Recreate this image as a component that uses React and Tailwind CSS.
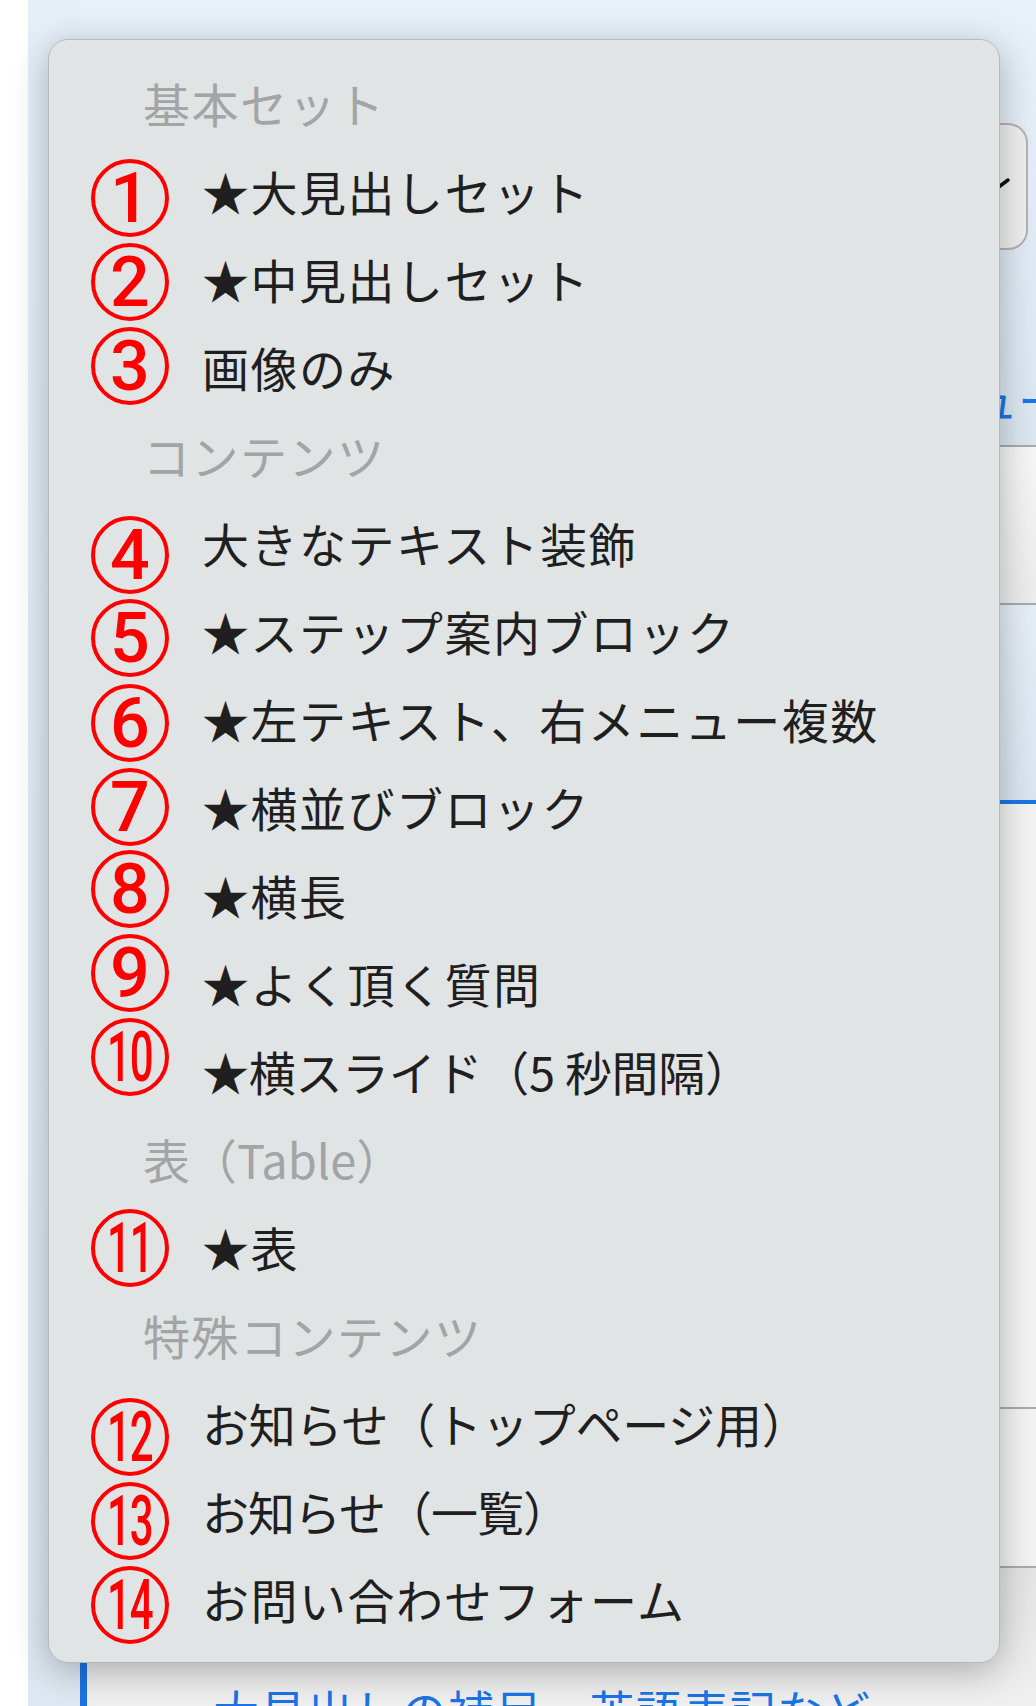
import React from "react";

// menu rows: header = group label, item = selectable option with red annotation number
const rows = [
  { type: "header", label: "基本セット" },
  { type: "item", no: "1", label: "★大見出しセット", shift: "translate-y-[4px]" },
  { type: "item", no: "2", label: "★中見出しセット", shift: "translate-y-[0px]" },
  { type: "item", no: "3", label: "画像のみ", shift: "-translate-y-[4px]" },
  { type: "header", label: "コンテンツ" },
  { type: "item", no: "4", label: "大きなテキスト装飾", shift: "translate-y-[9px]" },
  { type: "item", no: "5", label: "★ステップ案内ブロック", shift: "translate-y-[4px]" },
  { type: "item", no: "6", label: "★左テキスト、右メニュー複数", shift: "translate-y-[1px]" },
  { type: "item", no: "7", label: "★横並びブロック", shift: "-translate-y-[3px]" },
  { type: "item", no: "8", label: "★横長", shift: "-translate-y-[9px]" },
  { type: "item", no: "9", label: "★よく頂く質問", shift: "-translate-y-[13px]" },
  { type: "item", no: "10", label: "★横スライド（5 秒間隔）", shift: "-translate-y-[17px]", track: "tracking-[-0.3px]" },
  { type: "header", label: "表（Table）", track: "tracking-[0px]" },
  { type: "item", no: "11", label: "★表", shift: "-translate-y-[2px]" },
  { type: "header", label: "特殊コンテンツ" },
  { type: "item", no: "12", label: "お知らせ（トップページ用）", shift: "translate-y-[11px]", track: "tracking-[-0.2px]" },
  { type: "item", no: "13", label: "お知らせ（一覧）", shift: "translate-y-[7px]", track: "tracking-[-1px]" },
  { type: "item", no: "14", label: "お問い合わせフォーム", shift: "translate-y-[3px]" },
];

function Badge({ no, shift }) {
  const wide = no.length > 1;
  return (
    <div
      className={`ml-[42px] flex h-[78px] w-[78px] shrink-0 items-center justify-center rounded-full border-[4px] border-[#ff0000] ${shift}`}
    >
      <span
        className={`inline-block font-['Roboto','Liberation_Sans',sans-serif] text-[70px] font-medium leading-none text-[#ff0000] ${
          wide ? "scale-x-[0.6] tracking-[-2px]" : ""
        }`}
      >
        {no}
      </span>
    </div>
  );
}

function PageBehind() {
  return (
    <div className="flex h-full w-full">
      <div className="w-[28px] shrink-0 bg-white" />
      {/* sidebar strip */}
      <div className="w-[52px] shrink-0 bg-gradient-to-b from-[#e6eff8] to-[#dfe8f2]" />
      <div className="flex min-w-0 flex-1 flex-col">
        {/* top area with select */}
        <div className="flex h-[447px] shrink-0 flex-col border-b-2 border-[#a8abae] bg-gradient-to-b from-[#e8f1fa] to-[#dbe6f1]">
          <div className="flex justify-end pr-[8px] pt-[123px]">
            <div className="flex h-[127px] w-[420px] items-center justify-end rounded-[20px] border-2 border-[#b3b3b3] bg-[#efefef] pr-[14px]">
              <svg width="40" height="24" viewBox="0 0 40 24" className="-translate-y-[1px]">
                <polyline points="4,6 20,18 36,6" fill="none" stroke="#111" strokeWidth="3.5" strokeLinecap="round" />
              </svg>
            </div>
          </div>
          <div className="mt-auto whitespace-nowrap pb-[24px] pl-[662px] font-['Noto_Sans_CJK_JP',sans-serif] text-[46px] leading-none text-[#1b74e4]">
            トップメニュー
          </div>
        </div>
        <div className="h-[158px] shrink-0 border-b-2 border-[#a8abae] bg-gradient-to-b from-[#f6f6f6] to-[#ececec]" />
        <div className="h-[199px] shrink-0 border-b-[4px] border-[#1b74e4] bg-gradient-to-b from-[#e6eef7] to-[#dbe5f0]" />
        <div className="flex flex-1">
          <div className="w-[7px] shrink-0 bg-[#1b74e4]" />
          <div className="flex flex-1 flex-col">
            <div className="h-[605px] shrink-0 border-b-2 border-[#a8abae] bg-[#f3f3f3]" />
            <div className="h-[159px] shrink-0 border-b-2 border-[#a8abae] bg-[#f3f3f3]" />
            <div className="flex-1 bg-gradient-to-b from-[#e4e4e4] to-[#f2f2f2] pl-[126px] pt-[118px]">
              <div className="whitespace-nowrap font-['Noto_Sans_CJK_JP',sans-serif] text-[46px] leading-none tracking-[1px] text-[#1b74e4]">
                大見出しの補足、英語表記など
              </div>
            </div>
          </div>
        </div>
      </div>
    </div>
  );
}

export default function App() {
  return (
    <div className="relative h-[1706px] w-[1036px] overflow-hidden bg-white">
      <PageBehind />

      {/* open select menu (overlay) */}
      <div className="absolute left-[48px] top-[39px] h-[1624px] w-[952px] rounded-[20px] border border-[#b7babd] bg-[#e1e4e5] pt-[22px] font-['Noto_Sans_CJK_JP',sans-serif] shadow-[0_8px_36px_rgba(0,0,0,0.28)]">
        {rows.map((r, i) =>
          r.type === "header" ? (
            <div key={i} className="flex h-[88px] items-center pl-[94px]">
              <span
                className={`-translate-y-[4px] whitespace-nowrap text-[47px] leading-none text-[#a2a4a6] ${
                  r.track ?? "tracking-[1.5px]"
                }`}
              >
                {r.label}
              </span>
            </div>
          ) : (
            <div key={i} className="flex h-[88px] items-center">
              <Badge no={r.no} shift={r.shift} />
              <span
                className={`ml-[33px] -translate-y-[4px] whitespace-nowrap text-[47px] leading-none text-[#1f1f1f] ${
                  r.track ?? "tracking-[1.5px]"
                }`}
              >
                {r.label}
              </span>
            </div>
          )
        )}
      </div>
    </div>
  );
}
